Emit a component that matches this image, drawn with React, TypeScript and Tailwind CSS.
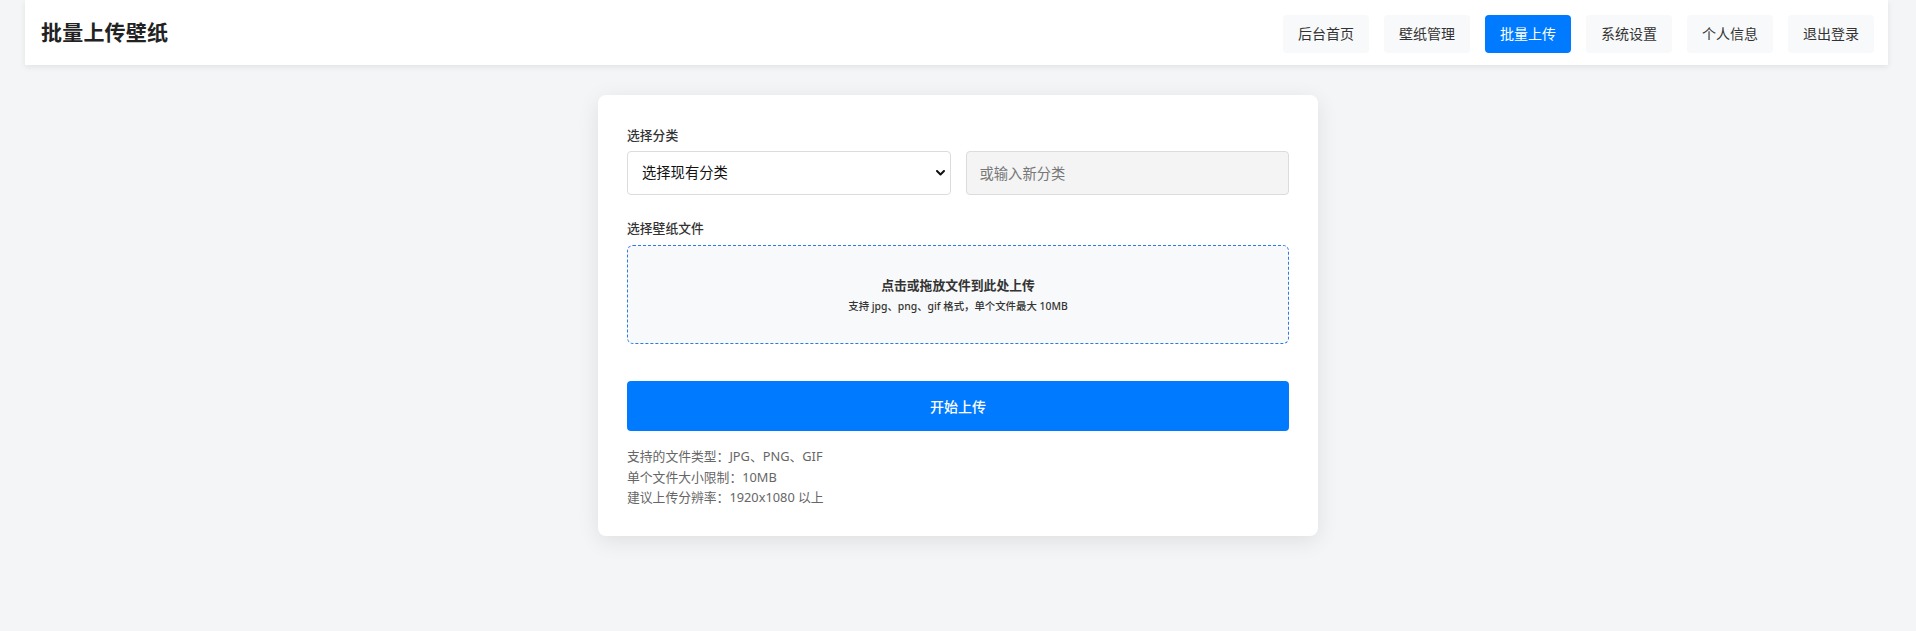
import { useState } from "react"

const navItems = ["后台首页", "壁纸管理", "批量上传", "系统设置", "个人信息", "退出登录"]

function Header() {
  return (
    <header className="ml-[25px] mr-[28px] h-[65px] bg-white shadow-[0_2px_6px_rgba(0,0,0,0.08)] flex items-center justify-between pl-4 pr-[14px]">
      <h1 className="text-[21px] font-bold text-[#222] tracking-[0.2px]">批量上传壁纸</h1>
      <nav className="flex items-center gap-[15px] mt-[2px]">
        {navItems.map((item) => (
          <a
            key={item}
            href="#"
            className={
              item === "批量上传"
                ? "h-[38px] px-[15px] flex items-center rounded-[4px] text-[14px] bg-[#007bff] text-white"
                : "h-[38px] px-[15px] flex items-center rounded-[4px] text-[14px] bg-[#f8f9fa] text-[#333]"
            }
          >
            {item}
          </a>
        ))}
      </nav>
    </header>
  )
}

function ChevronDown() {
  return (
    <svg width="9" height="6" viewBox="0 0 9 6" className="absolute right-[6px] top-1/2 -translate-y-1/2 pointer-events-none">
      <path d="M1 1l3.5 3.5L8 1" fill="none" stroke="#111" strokeWidth="2" strokeLinecap="round" strokeLinejoin="round" />
    </svg>
  )
}

export default function App() {
  const [category, setCategory] = useState("")

  return (
    <div className="min-h-screen bg-[#f4f5f7] font-['Noto_Sans','Noto_Sans_CJK_SC',sans-serif]">
      <Header />

      <main className="flex justify-center pt-[30px]">
        <div className="w-[720px] bg-white rounded-[8px] shadow-[0_5px_22px_rgba(0,0,0,0.09)] px-[29px] pt-[30px] pb-[28px]">
          <div className="mb-[23px]">
            <label className="block text-[12.8px] leading-[20px] font-medium text-[#333] mb-[6px]">选择分类</label>
            <div className="grid grid-cols-2 gap-[15px]">
              <div className="relative">
                <select
                  value={category}
                  onChange={(e) => setCategory(e.target.value)}
                  className="w-full h-[44px] appearance-none bg-white border border-[#dcdcdc] rounded-[4px] pl-[14px] pr-8 text-[14.3px] text-[#111] outline-none"
                >
                  <option value="">选择现有分类</option>
                  <option value="nature">自然风景</option>
                  <option value="anime">动漫</option>
                </select>
                <ChevronDown />
              </div>
              <input
                type="text"
                placeholder="或输入新分类"
                className="w-full h-[44px] bg-[#f4f4f5] border border-[#dcdcdc] rounded-[4px] px-[13px] text-[14.3px] text-[#222] placeholder:text-[#777] outline-none"
              />
            </div>
          </div>

          <div className="mb-[37px]">
            <label className="block text-[12.8px] leading-[20px] font-medium text-[#333] mb-[7px]">选择壁纸文件</label>
            <div className="border border-dashed border-[#2c7be5] rounded-[6px] bg-[#f8f9fa] pt-[30px] pb-[29px] text-center cursor-pointer">
              <p className="text-[12.8px] leading-[19px] font-bold text-[#333]">点击或拖放文件到此处上传</p>
              <p className="mt-[4px] text-[10.4px] leading-[15px] font-medium text-[#333]">支持 jpg、png、gif 格式，单个文件最大 10MB</p>
            </div>
          </div>

          <button className="w-full h-[50px] bg-[#007bff] text-white text-[14px] font-medium rounded-[4px]">开始上传</button>

          <div className="mt-[15px] text-[12.8px] leading-[20.5px] text-[#666]">
            <p>支持的文件类型：JPG、PNG、GIF</p>
            <p>单个文件大小限制：10MB</p>
            <p>建议上传分辨率：1920x1080 以上</p>
          </div>
        </div>
      </main>
    </div>
  )
}
